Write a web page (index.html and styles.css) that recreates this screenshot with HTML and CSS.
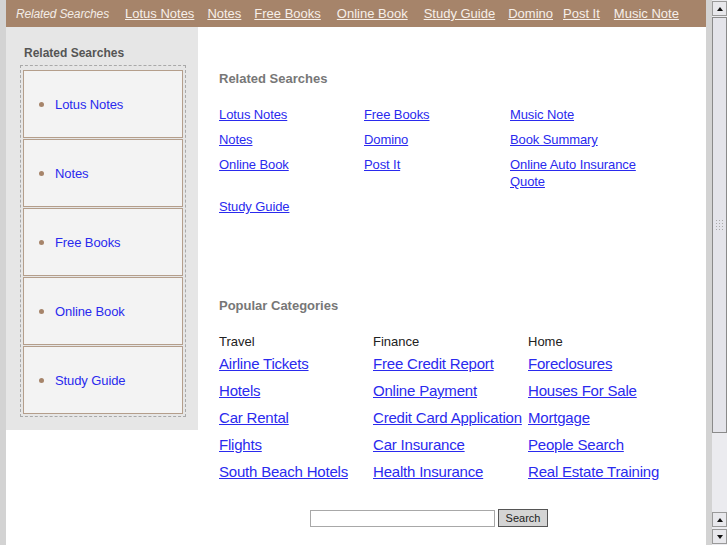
FILE: index.html
```html
<!DOCTYPE html>
<html lang="en">
<head>
    <title>Related Searches</title>
    <meta charset="UTF-8">
    <link rel="stylesheet" href="styles.css">
</head>
<body>
    <div class="page">
        <div class="topbar">
            <span class="topbar-title">Related Searches</span>
            <a href="#">Lotus Notes</a>
            <a href="#">Notes</a>
            <a href="#" class="wide">Free Books</a>
            <a href="#" class="wide">Online Book</a>
            <a href="#">Study Guide</a>
            <a href="#" class="narrow">Domino</a>
            <a href="#" class="mid">Post It</a>
            <a href="#">Music Note</a>
        </div>

        <div class="layout">
            <div class="sidebar">
                <h4>Related Searches</h4>
                <ul class="side-list">
                    <li><a href="#">Lotus Notes</a></li>
                    <li><a href="#">Notes</a></li>
                    <li><a href="#">Free Books</a></li>
                    <li><a href="#">Online Book</a></li>
                    <li><a href="#">Study Guide</a></li>
                </ul>
            </div>

            <div class="main">
                <h3>Related Searches</h3>
                <div class="related">
                    <a href="#">Lotus Notes</a>
                    <a href="#">Free Books</a>
                    <a href="#">Music Note</a>
                    <a href="#">Notes</a>
                    <a href="#">Domino</a>
                    <a href="#">Book Summary</a>
                    <a href="#">Online Book</a>
                    <a href="#">Post It</a>
                    <a href="#">Online Auto Insurance Quote</a>
                    <a href="#">Study Guide</a>
                </div>

                <h3 class="popular-title">Popular Categories</h3>
                <div class="popular">
                    <div class="cat">
                        <div class="cat-name">Travel</div>
                        <a href="#">Airline Tickets</a>
                        <a href="#">Hotels</a>
                        <a href="#">Car Rental</a>
                        <a href="#">Flights</a>
                        <a href="#">South Beach Hotels</a>
                    </div>
                    <div class="cat">
                        <div class="cat-name">Finance</div>
                        <a href="#">Free Credit Report</a>
                        <a href="#">Online Payment</a>
                        <a href="#">Credit Card Application</a>
                        <a href="#">Car Insurance</a>
                        <a href="#">Health Insurance</a>
                    </div>
                    <div class="cat">
                        <div class="cat-name">Home</div>
                        <a href="#">Foreclosures</a>
                        <a href="#">Houses For Sale</a>
                        <a href="#">Mortgage</a>
                        <a href="#">People Search</a>
                        <a href="#">Real Estate Training</a>
                    </div>
                </div>

                <form class="search" onsubmit="return false;">
                    <input type="text">
                    <button type="submit">Search</button>
                </form>
            </div>
        </div>
    </div>

    <div class="scrollbar">
        <div class="sb-btn"><span class="arrow-up"></span></div>
        <div class="sb-thumb"><span class="grip"></span></div>
        <div class="sb-track"></div>
        <div class="sb-btn"><span class="arrow-up"></span></div>
        <div class="sb-btn"><span class="arrow-down"></span></div>
    </div>
</body>
</html>
```

FILE: styles.css
```css
html, body {
    height: 545px;
    overflow: hidden;
}

body {
    margin: 0;
    padding-left: 6px;
    display: flex;
    gap: 6px;
    background: #d3d3d3;
    font-family: "Liberation Sans", Arial, sans-serif;
}

.page {
    width: 700px;
    background: #fff;
}

/* top bar */
.topbar {
    height: 27px;
    background: #a6846a;
    display: flex;
    align-items: center;
    padding: 0 10px;
    font-size: 13px;
}

.topbar-title {
    font-style: italic;
    font-size: 12px;
    color: #f3ece6;
    margin-right: 16px;
    letter-spacing: -0.15px;
}

.topbar a {
    color: #f6efe9;
    margin-right: 13px;
}

.topbar a.wide { margin-right: 16px; }
.topbar a.mid { margin-right: 14px; }
.topbar a.narrow { margin-right: 10px; }

.layout {
    display: flex;
    align-items: flex-start;
}

/* sidebar */
.sidebar {
    width: 166px;
    background: #e6e6e6;
    padding: 18px 12px 13px 14px;
}

.sidebar h4 {
    margin: 0 0 4px 4px;
    font-size: 12px;
    line-height: 16px;
    color: #555;
}

.side-list {
    list-style: none;
    margin: 0;
    padding: 4px 2px 2px 2px;
    border: 1px dashed #a9a9a9;
}

.side-list li {
    height: 66px;
    margin-bottom: 1px;
    border: 1px solid #b49e8b;
    background: #f3f3f3;
    display: flex;
    align-items: center;
    padding-left: 15px;
    font-size: 13px;
    letter-spacing: -0.1px;
}

.side-list li:last-child { margin-bottom: 0; }

.side-list li::before {
    content: "";
    width: 5px;
    height: 5px;
    border-radius: 50%;
    background: #a6846a;
    margin-right: 11px;
}

.side-list a {
    color: #2a2aee;
    text-decoration: none;
}

/* main column */
.main {
    flex: 1;
    padding: 44px 21px 0 21px;
}

.main h3 {
    margin: 0;
    font-size: 13px;
    line-height: 16px;
    color: #777;
}

.main a {
    color: #2a2aee;
}

.related {
    display: grid;
    grid-template-columns: 145px 146px 145px;
    row-gap: 8px;
    margin-top: 19px;
    font-size: 13px;
    line-height: 17px;
    align-items: start;
    letter-spacing: -0.1px;
}

.popular-title {
    margin-top: 83px !important;
}

.popular {
    display: grid;
    grid-template-columns: 154px 155px auto;
    margin-top: 20px;
}

.cat {
    display: flex;
    flex-direction: column;
    align-items: flex-start;
    gap: 9px;
    font-size: 15px;
    line-height: 18px;
    letter-spacing: -0.2px;
}

.cat-name {
    font-size: 13px;
    line-height: 16px;
    color: #222;
    margin-bottom: -4px;
    letter-spacing: 0;
}

.search {
    display: flex;
    align-items: center;
    gap: 3px;
    margin: 28px 0 0 91px;
}

.search input {
    width: 181px;
    height: 13px;
    padding: 1px;
    border: 1px solid #a8a8a8;
    margin: 0;
}

.search button {
    width: 50px;
    height: 18px;
    padding: 0;
    font-family: "Liberation Sans", Arial, sans-serif;
    font-size: 11px;
    background: #d4d4d4;
    border: 1px solid #555;
    color: #222;
}

/* window scrollbar */
.scrollbar {
    width: 15px;
    display: flex;
    flex-direction: column;
    background: #ebebef;
}

.sb-btn {
    height: 13px;
    margin: 1px 0;
    border: 1px solid #9a9a9a;
    background: #e8e8ec;
    display: flex;
    align-items: center;
    justify-content: center;
}

.arrow-up {
    border-left: 3px solid transparent;
    border-right: 3px solid transparent;
    border-bottom: 4px solid #111;
}

.arrow-down {
    border-left: 3px solid transparent;
    border-right: 3px solid transparent;
    border-top: 4px solid #111;
}

.sb-thumb {
    height: 414px;
    border: 1px solid #8a8a8a;
    background: #e4e4ea;
    display: flex;
    align-items: center;
    justify-content: center;
}

.grip {
    width: 9px;
    height: 12px;
    background-image: radial-gradient(#aaa 0.8px, transparent 1px);
    background-size: 3px 3px;
}

.sb-track {
    flex: 1;
}
```
